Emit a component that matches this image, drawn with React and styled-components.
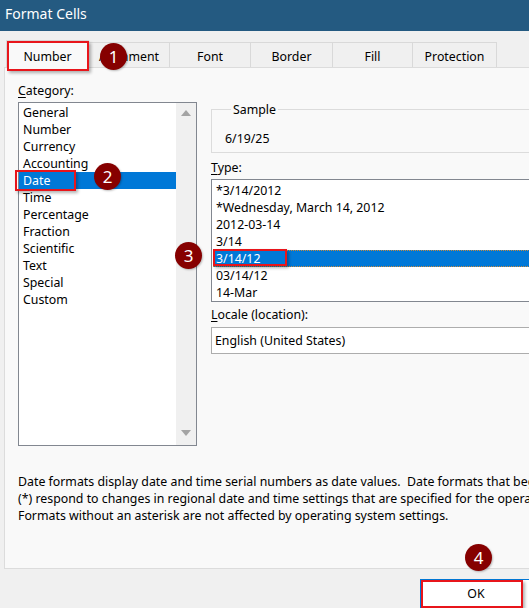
import React from 'react';
import styled, { createGlobalStyle } from 'styled-components';

const GlobalStyle = createGlobalStyle`
  html, body {
    margin: 0;
    padding: 0;
    background: #f0f0f0;
  }
  body {
    font-family: "Noto Sans", "Open Sans", sans-serif;
    font-size: 12.35px;
    color: #000;
  }
`;

const Window = styled.div`
  width: 529px;
  height: 608px;
  display: flex;
  flex-direction: column;
  overflow: hidden;
  background: #f0f0f0;
`;

const TitleBar = styled.div`
  height: 31px;
  box-sizing: border-box;
  flex: none;
  display: flex;
  align-items: center;
  padding: 0 0 4px 5px;
  background: #245a81;
  color: #fff;
  font-size: 14px;
`;

const TabStrip = styled.div`
  flex: none;
  display: flex;
  align-items: flex-end;
  height: 28px;
  padding: 9px 0 0 6px;
`;

const Tab = styled.div`
  position: ${({ $active }) => ($active ? 'relative' : 'static')};
  z-index: ${({ $active }) => ($active ? 1 : 'auto')};
  box-sizing: border-box;
  width: ${({ $w }) => $w}px;
  height: ${({ $active }) => ($active ? 28 : 26)}px;
  display: flex;
  align-items: center;
  justify-content: center;
  padding-top: ${({ $active }) => ($active ? 4 : 2)}px;
  background: ${({ $active }) => ($active ? '#f9f9f9' : '#f0f0f0')};
  border: 1px solid #d9d9d9;
  border-bottom: none;
  margin-right: -1px;
`;

const Panel = styled.div`
  flex: 1;
  margin-top: -1px;
  margin-right: -60px;
  padding: 14px 0 0 13px;
  background: #f9f9f9;
  border: 1px solid #dcdcdc;
  border-right: none;
  display: flex;
  flex-direction: column;
  margin-left: 4px;
`;

const Columns = styled.div`
  display: flex;
  gap: 14px;
`;

const LeftCol = styled.div`
  width: 179px;
  flex: none;
  display: flex;
  flex-direction: column;
`;

const RightCol = styled.div`
  width: 360px;
  flex: none;
  display: flex;
  flex-direction: column;
`;

const FieldLabel = styled.div`
  line-height: 17px;
  margin-top: ${({ $mt = 0 }) => $mt}px;
  & u {
    text-decoration: underline;
    text-underline-offset: 2px;
  }
`;

const ListBox = styled.div`
  box-sizing: border-box;
  height: ${({ $h }) => $h}px;
  margin-top: 3px;
  background: #fff;
  border: 1px solid #828790;
  display: flex;
`;

const ListItems = styled.div`
  flex: 1;
  padding-top: ${({ $pt = 1 }) => $pt}px;
  padding-left: ${({ $pl = 0 }) => $pl}px;
`;

const Item = styled.div`
  position: relative;
  height: 17px;
  line-height: 17px;
  padding-left: ${({ $pl = 4 }) => $pl}px;
  white-space: nowrap;
  background: ${({ $selected }) => ($selected ? '#0078d7' : 'transparent')};
  color: ${({ $selected }) => ($selected ? '#fff' : '#000')};
  outline: ${({ $focus }) => ($focus ? '1px dotted #c98a3c' : 'none')};
  outline-offset: -1px;
`;

const ScrollBar = styled.div`
  width: 20px;
  flex: none;
  background: #f0f0f0;
  display: flex;
  flex-direction: column;
  justify-content: space-between;
  align-items: center;
  padding: 7px 0 9px;
`;

const Arrow = styled.div`
  width: 0;
  height: 0;
  border-left: 5px solid transparent;
  border-right: 5px solid transparent;
  ${({ $down }) =>
    $down ? 'border-top: 6px solid #a3a3a3;' : 'border-bottom: 6px solid #a3a3a3;'}
`;

const GroupBox = styled.fieldset`
  margin: 19px 0 0;
  padding: 12px 13px 5px;
  border: 1px solid #dcdcdc;
  & legend {
    padding: 0 2px;
    margin-left: 6px;
    line-height: 17px;
  }
`;

const SampleValue = styled.div`
  line-height: 17px;
`;

const Combo = styled.div`
  box-sizing: border-box;
  height: 27px;
  margin-top: 4px;
  padding-left: 3px;
  display: flex;
  align-items: center;
  background: #fff;
  border: 1px solid #adadad;
`;

const Description = styled.div`
  margin-top: 27px;
  line-height: 17px;
  & div {
    white-space: pre;
  }
`;

const Footer = styled.div`
  height: 39px;
  flex: none;
  display: flex;
  justify-content: flex-end;
  padding-top: 10px;
  box-sizing: border-box;
`;

const Button = styled.div`
  position: relative;
  box-sizing: border-box;
  width: 112px;
  height: 30px;
  margin-right: -3px;
  flex: none;
  display: flex;
  align-items: center;
  justify-content: center;
  background: #fff;
  border: 1px solid #0078d7;
  padding-bottom: 2px;
`;

// annotation overlays: red highlight frame and numbered step badge
const Callout = styled.div`
  position: absolute;
  left: ${({ $x }) => $x}px;
  top: ${({ $y }) => $y}px;
  width: ${({ $w }) => $w}px;
  height: ${({ $h }) => $h}px;
  box-sizing: border-box;
  border: 2px solid #e8151b;
  box-shadow: 2px 2px 3px rgba(0, 0, 0, 0.3);
  pointer-events: none;
  z-index: 4;
`;

const Badge = styled.div`
  position: absolute;
  left: ${({ $x }) => $x}px;
  top: ${({ $y }) => $y}px;
  width: 27px;
  height: 27px;
  border-radius: 50%;
  background: #860000;
  color: #fff;
  font-size: 17px;
  line-height: 27px;
  text-align: center;
  box-shadow: 1px 1px 2px rgba(0, 0, 0, 0.25);
  z-index: 5;
`;

const tabs = [
  { label: 'Number', w: 83 },
  { label: 'Alignment', w: 82 },
  { label: 'Font', w: 82 },
  { label: 'Border', w: 83 },
  { label: 'Fill', w: 81 },
  { label: 'Protection', w: 85 },
];

const categories = [
  'General',
  'Number',
  'Currency',
  'Accounting',
  'Date',
  'Time',
  'Percentage',
  'Fraction',
  'Scientific',
  'Text',
  'Special',
  'Custom',
];

const types = [
  '*3/14/2012',
  '*Wednesday, March 14, 2012',
  '2012-03-14',
  '3/14',
  '3/14/12',
  '03/14/12',
  '14-Mar',
];

export default function App() {
  return (
    <>
      <GlobalStyle />
      <Window>
        <TitleBar>Format Cells</TitleBar>

        <TabStrip>
          {tabs.map((t, i) => (
            <Tab key={t.label} $w={t.w} $active={i === 0}>
              {t.label}
              {i === 0 && (
                <>
                  <Callout $x={0} $y={0} $w={82} $h={30} />
                  <Badge $x={93} $y={2}>1</Badge>
                </>
              )}
            </Tab>
          ))}
        </TabStrip>

        <Panel>
          <Columns>
            <LeftCol>
              <FieldLabel>
                <u>C</u>ategory:
              </FieldLabel>
              <ListBox $h={344}>
                <ListItems>
                  {categories.map((c) => (
                    <Item key={c} $selected={c === 'Date'}>
                      {c}
                      {c === 'Date' && (
                        <>
                          <Callout $x={-4} $y={-2} $w={61} $h={21} />
                          <Badge $x={75} $y={-9}>2</Badge>
                        </>
                      )}
                    </Item>
                  ))}
                </ListItems>
                <ScrollBar>
                  <Arrow />
                  <Arrow $down />
                </ScrollBar>
              </ListBox>
            </LeftCol>

            <RightCol>
              <GroupBox>
                <legend>Sample</legend>
                <SampleValue>6/19/25</SampleValue>
              </GroupBox>

              <FieldLabel $mt={6}>
                <u>T</u>ype:
              </FieldLabel>
              <ListBox $h={123}>
                <ListItems $pt={2} $pl={1}>
                  {types.map((t) => {
                    const sel = t === '3/14/12';
                    return (
                      <Item key={t} $pl={3} $selected={sel} $focus={sel}>
                        {t}
                        {sel && (
                          <>
                            <Callout $x={0} $y={-1} $w={74} $h={17} />
                            <Badge $x={-38} $y={-8}>3</Badge>
                          </>
                        )}
                      </Item>
                    );
                  })}
                </ListItems>
              </ListBox>

              <FieldLabel $mt={4}>
                <u>L</u>ocale (location):
              </FieldLabel>
              <Combo>English (United States)</Combo>
            </RightCol>
          </Columns>

          <Description>
            <div>Date formats display date and time serial numbers as date values.  Date formats that begin with an asterisk</div>
            <div>(*) respond to changes in regional date and time settings that are specified for the operating system.</div>
            <div>Formats without an asterisk are not affected by operating system settings.</div>
          </Description>
        </Panel>

        <Footer>
          <Button>
            OK
            <Callout $x={0} $y={0} $w={102} $h={28} />
            <Badge $x={44} $y={-36}>4</Badge>
          </Button>
        </Footer>
      </Window>
    </>
  );
}
